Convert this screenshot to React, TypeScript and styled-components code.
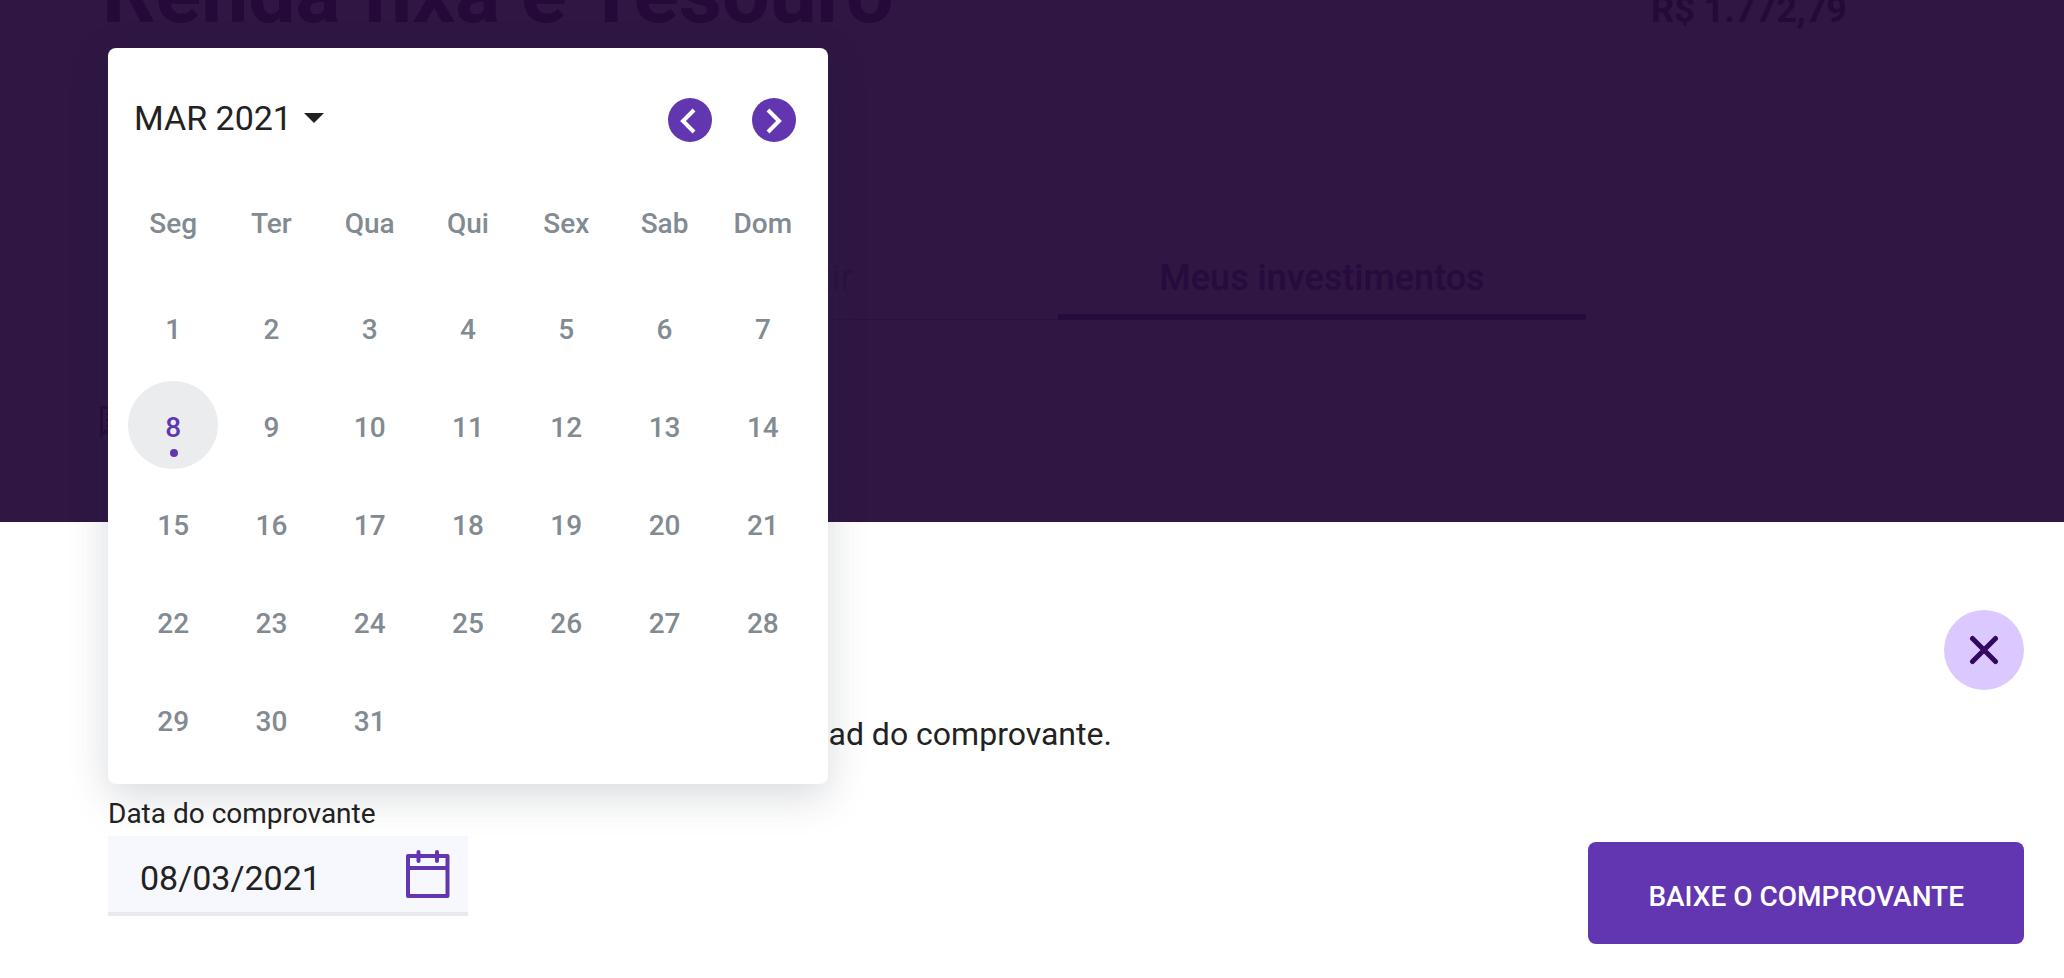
import React, { useState } from "react";
import styled, { createGlobalStyle } from "styled-components";

const color = {
  backdrop: "#2f1643",
  backdropInk: "#250938",
  backdropTab: "#270a3e",
  backdropFaint: "#2b123e",
  primary: "#6136b0",
  primaryDark: "#320761",
  primaryLight: "#dbc8ff",
  text: "#222222",
  muted: "#828a92",
  field: "#f7f8fd",
  fieldLine: "#e9e8ef",
  today: "#ebecee",
};

const GlobalStyle = createGlobalStyle`
  *, *::before, *::after { box-sizing: border-box; }
  body {
    margin: 0;
    background: #ffffff;
    color: ${color.text};
    font-family: Roboto, "Open Sans", sans-serif;
  }
  button, input { font: inherit; color: inherit; }
  button { border: 0; padding: 0; background: none; cursor: pointer; }
`;

const Page = styled.div`
  display: flex;
  flex-direction: column;
  min-height: 100vh;
  overflow: hidden;
`;

const Backdrop = styled.main`
  flex: 1;
  padding: 0 48px 0 100px;
  background: ${color.backdrop};
  color: ${color.backdropInk};
`;

const Heading = styled.header`
  display: flex;
  align-items: baseline;
  justify-content: space-between;
  margin-top: -54px;
  padding: 0 169px 0 2px;
`;

const Title = styled.h1`
  margin: 0;
  font-size: 84px;
  line-height: 96px;
  font-weight: 700;
`;

const Balance = styled.strong`
  font-size: 36px;
  font-weight: 700;
`;

const Tabs = styled.nav`
  display: grid;
  grid-template-columns: 1fr 1fr;
  max-width: 1056px;
  margin: 212px auto 0;
`;

const Tab = styled.a<{ $active?: boolean }>`
  padding-bottom: 12px;
  border-bottom: ${(p) => (p.$active ? `6px solid ${color.backdropTab}` : `1px solid ${color.backdropFaint}`)};
  color: ${(p) => (p.$active ? color.backdropTab : color.backdropFaint)};
  font-size: 36px;
  line-height: 48px;
  font-weight: ${(p) => (p.$active ? 500 : 400)};
  text-align: center;
  text-decoration: none;
`;

const Receipt = styled.button`
  display: block;
  margin-top: 86px;
  color: ${color.backdropTab};
  svg { display: block; }
`;

const Sheet = styled.section`
  display: flex;
  flex-direction: column;
  padding: 88px 40px 34px 108px;
  background: #ffffff;
`;

const CloseButton = styled.button`
  display: flex;
  align-items: center;
  justify-content: center;
  align-self: flex-end;
  width: 80px;
  height: 80px;
  border-radius: 50%;
  background: ${color.primaryLight};
  color: ${color.primaryDark};
`;

const Message = styled.p`
  margin: 24px 0 0;
  font-size: 32px;
  line-height: 40px;
`;

const SheetFooter = styled.div`
  display: flex;
  align-items: flex-end;
  justify-content: space-between;
  margin-top: 42px;
`;

const DateField = styled.div`
  position: relative;
  width: 360px;
  margin-bottom: 28px;
`;

const FieldLabel = styled.label`
  display: block;
  margin-bottom: 4px;
  font-size: 28px;
  line-height: 36px;
`;

const FieldBox = styled.div`
  display: flex;
  align-items: center;
  height: 80px;
  padding: 0 17px 0 32px;
  border-bottom: 4px solid ${color.fieldLine};
  background: ${color.field};
`;

const DateInput = styled.input`
  flex: 1;
  min-width: 0;
  height: 100%;
  padding: 8px 0 0;
  border: 0;
  outline: 0;
  background: transparent;
  font-size: 34px;
`;

const IconButton = styled.button`
  svg { display: block; }
`;

const DownloadButton = styled.button`
  height: 102px;
  padding: 6px 60px 0;
  border-radius: 8px;
  background: ${color.primary};
  color: #ffffff;
  font-size: 28px;
  font-weight: 500;
`;

const Calendar = styled.div`
  position: absolute;
  bottom: calc(100% + 12px);
  left: 0;
  z-index: 1;
  width: 720px;
  padding: 50px 16px 16px;
  border-radius: 8px;
  background: #ffffff;
  box-shadow: 0 12px 40px rgba(40, 52, 64, 0.18);
`;

const CalendarHeader = styled.div`
  display: flex;
  align-items: flex-start;
  justify-content: space-between;
  padding: 0 16px 0 10px;
`;

const MonthButton = styled.button`
  display: flex;
  align-items: center;
  gap: 12px;
  font-size: 34px;
  line-height: 40px;
`;

const Arrows = styled.div`
  display: flex;
  gap: 40px;
`;

const ArrowButton = styled.button`
  display: flex;
  align-items: center;
  justify-content: center;
  width: 44px;
  height: 44px;
  border-radius: 50%;
  background: ${color.primary};
  color: #ffffff;
`;

const Month = styled.table`
  width: 100%;
  margin-top: 38px;
  border-collapse: collapse;
  table-layout: fixed;
  color: ${color.muted};
  font-size: 28px;
  font-weight: 500;
`;

const Weekday = styled.th`
  height: 98px;
  padding: 0 0 12px;
  font-weight: 500;
  text-align: center;
`;

const DayCell = styled.td`
  height: 98px;
  padding: 0;
  text-align: center;
`;

const Day = styled.button<{ $selected?: boolean }>`
  position: relative;
  width: 90px;
  height: 88px;
  padding-top: 4px;
  border-radius: 50%;
  background: ${(p) => (p.$selected ? color.today : "transparent")};
  color: ${(p) => (p.$selected ? color.primary : "inherit")};
  font-weight: 500;

  &::after {
    content: "";
    display: ${(p) => (p.$selected ? "block" : "none")};
    position: absolute;
    bottom: 12px;
    left: 50%;
    width: 8px;
    height: 8px;
    margin-left: -3px;
    border-radius: 50%;
    background: ${color.primary};
  }
`;

const Chevron = ({ back }: { back?: boolean }) => (
  <svg width="44" height="44" viewBox="0 0 44 44" fill="none" stroke="currentColor" strokeWidth="4" aria-hidden="true">
    <path d={back ? "M26 12 15 23 26 34" : "M16 12 27 23 16 34"} />
  </svg>
);

const WEEKDAYS = ["Seg", "Ter", "Qua", "Qui", "Sex", "Sab", "Dom"];
const WEEKS = [0, 1, 2, 3, 4].map((week) =>
  WEEKDAYS.map((_, i) => week * 7 + i + 1).map((day) => (day <= 31 ? day : null))
);

export default function App() {
  const [selected, setSelected] = useState(8);
  const date = `${String(selected).padStart(2, "0")}/03/2021`;

  return (
    <>
      <GlobalStyle />
      <Page>
        <Backdrop>
          <Heading>
            <Title>Renda fixa e Tesouro</Title>
            <Balance>R$ 1.772,79</Balance>
          </Heading>
          <Tabs>
            <Tab href="#investir">Investir</Tab>
            <Tab href="#meus-investimentos" $active>
              Meus investimentos
            </Tab>
          </Tabs>
          <Receipt type="button" aria-label="Comprovante">
            <svg width="28" height="32" viewBox="0 0 28 32" fill="none" stroke="currentColor" strokeWidth="3" aria-hidden="true">
              <path d="M1.5 29V1.5h25V29l-4-4-4.5 4-4-4-4 4-4.5-4z" />
              <path d="M6 8h16M6 14h16M6 20h16" strokeWidth="2" />
            </svg>
          </Receipt>
        </Backdrop>

        <Sheet aria-label="Baixar comprovante">
          <CloseButton type="button" aria-label="Fechar">
            <svg width="30" height="30" viewBox="0 0 30 30" fill="none" stroke="currentColor" strokeWidth="5" strokeLinecap="round" aria-hidden="true">
              <path d="M3.5 3.5l23 23M26.5 3.5l-23 23" />
            </svg>
          </CloseButton>
          <Message>Selecione uma data desejada para iniciar o download do comprovante.</Message>
          <SheetFooter>
            <DateField>
              <FieldLabel htmlFor="data">Data do comprovante</FieldLabel>
              <FieldBox>
                <DateInput id="data" type="text" value={date} readOnly />
                <IconButton type="button" aria-label="Abrir calendário">
                  <svg width="46" height="50" viewBox="0 0 46 50" fill="none" stroke={color.primary} strokeWidth="4" strokeLinejoin="round" aria-hidden="true">
                    <path d="M3 7h39.500v40H3zM3 19h39" />
                    <path d="M13.500 3v9M32 3v9" strokeLinecap="round" />
                  </svg>
                </IconButton>
              </FieldBox>
              <Calendar role="dialog" aria-label="Calendário">
                <CalendarHeader>
                  <MonthButton type="button">
                    MAR 2021
                    <svg width="20" height="10" viewBox="0 0 20 10" fill="currentColor" aria-hidden="true">
                      <path d="M0 0h20L10 10z" />
                    </svg>
                  </MonthButton>
                  <Arrows>
                    <ArrowButton type="button" aria-label="Mês anterior">
                      <Chevron back />
                    </ArrowButton>
                    <ArrowButton type="button" aria-label="Próximo mês">
                      <Chevron />
                    </ArrowButton>
                  </Arrows>
                </CalendarHeader>
                <Month>
                  <thead>
                    <tr>
                      {WEEKDAYS.map((name) => (
                        <Weekday key={name} scope="col">
                          {name}
                        </Weekday>
                      ))}
                    </tr>
                  </thead>
                  <tbody>
                    {WEEKS.map((week, i) => (
                      <tr key={i}>
                        {week.map((day, j) => (
                          <DayCell key={j}>
                            {day && (
                              <Day type="button" $selected={day === selected} onClick={() => setSelected(day)}>
                                {day}
                              </Day>
                            )}
                          </DayCell>
                        ))}
                      </tr>
                    ))}
                  </tbody>
                </Month>
              </Calendar>
            </DateField>
            <DownloadButton type="button">BAIXE O COMPROVANTE</DownloadButton>
          </SheetFooter>
        </Sheet>
      </Page>
    </>
  );
}
